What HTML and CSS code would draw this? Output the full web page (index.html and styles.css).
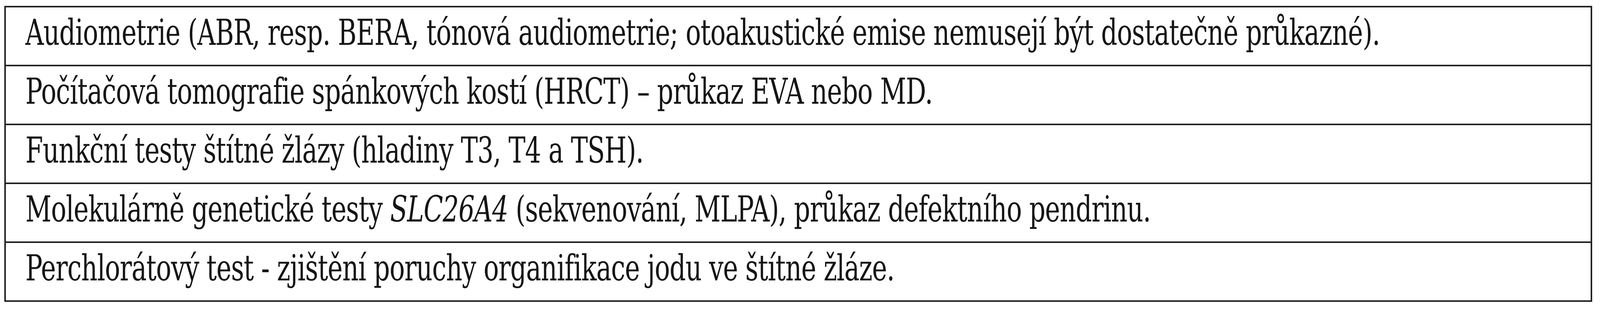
FILE: index.html
```html
<!DOCTYPE html>
<html lang="cs">
<head>
<meta charset="utf-8">
<link rel="stylesheet" href="styles.css">
</head>
<body>
<table class="tests">
  <tbody>
    <tr><td><span class="txt">Audiometrie (ABR, resp. BERA, tónová audiometrie; otoakustické emise nemusejí být dostatečně průkazné).</span></td></tr>
    <tr><td><span class="txt">Počítačová tomografie spánkových kostí (HRCT) – průkaz EVA nebo MD.</span></td></tr>
    <tr><td><span class="txt">Funkční testy štítné žlázy (hladiny T3, T4 a TSH).</span></td></tr>
    <tr><td><span class="txt">Molekulárně genetické testy <em>SLC26A4</em> (sekvenování, MLPA), průkaz defektního pendrinu.</span></td></tr>
    <tr><td><span class="txt">Perchlorátový test - zjištění poruchy organifikace jodu ve štítné žláze.</span></td></tr>
  </tbody>
</table>
</body>
</html>
```
FILE: styles.css
```css
html, body {
  background: #ffffff;
}
body {
  margin: 0;
  padding: 15px 0 0 11px;
}
.tests {
  width: 4065px;
  table-layout: fixed;
  border-collapse: collapse;
  border: 4px solid #222222;
  font-family: "DejaVu Serif", serif;
  font-size: 91px;
  color: #151515;
}
.tests td {
  border: 4px solid #222222;
  height: 151px;
  box-sizing: border-box;
  padding: 19px 0 0 50px;
  line-height: 91px;
  vertical-align: top;
  white-space: nowrap;
  overflow: hidden;
}
.txt {
  display: inline-block;
  letter-spacing: -1.5px;
  transform: scaleX(0.716);
  transform-origin: 0 50%;
}
.txt em {
  font-style: italic;
}
```
